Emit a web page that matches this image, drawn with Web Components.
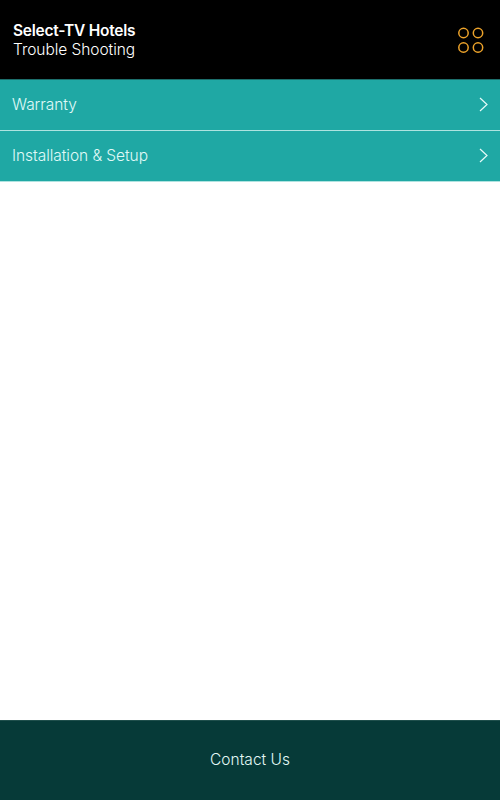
<!DOCTYPE html>
<html>
<head>
<meta charset="utf-8">
<title>Trouble Shooting</title>
<style>
  html, body { margin: 0; height: 100%; }
  body { font-family: "Inter", "Lato", sans-serif; background: #fff; }
</style>
</head>
<body>
<app-screen>
  <top-bar slot="header" title="Select-TV Hotels" subtitle="Trouble Shooting"></top-bar>
  <menu-row>Warranty</menu-row>
  <menu-row>Installation &amp; Setup</menu-row>
  <contact-bar slot="footer">Contact Us</contact-bar>
</app-screen>

<script>
class AppScreen extends HTMLElement {
    constructor() {
        super();
        this.attachShadow({ mode: "open" });
        this.shadowRoot.innerHTML = `
      <style>
        :host {
          display: flex;
          flex-direction: column;
          height: 800px;
        }
        main {
          flex: 1;
          display: block;
        }
      </style>
      <slot name="header"></slot>
      <main><slot></slot></main>
      <slot name="footer"></slot>
    `;
    }
}

class TopBar extends HTMLElement {
    constructor() {
        super();
        this.attachShadow({ mode: "open" });
    }

    connectedCallback() {
        this.shadowRoot.innerHTML = `
      <style>
        :host {
          display: flex;
          align-items: center;
          justify-content: space-between;
          height: 80px;
          padding: 0 16px 0 13px;
          background: #000;
          color: #fff;
          box-sizing: border-box;
          border-bottom: 1px solid #1c6f6c;
        }
        .title {
          font-size: 15.5px;
          line-height: 19px;
          font-weight: 600;
          letter-spacing: -0.25px;
        }
        .subtitle {
          font-size: 15.5px;
          line-height: 19px;
          font-weight: 300;
          letter-spacing: -0.05px;
        }
        svg { display: block; }
      </style>
      <div class="text">
        <div class="title">${this.getAttribute("title")}</div>
        <div class="subtitle">${this.getAttribute("subtitle")}</div>
      </div>
      <svg width="26" height="26" viewBox="0 0 26 26" fill="none" stroke="#eda32a" stroke-width="1.5">
        <circle cx="5.5" cy="6" r="4.7"/>
        <circle cx="20" cy="6" r="4.7"/>
        <circle cx="5.5" cy="20.5" r="4.7"/>
        <circle cx="20" cy="20.5" r="4.7"/>
      </svg>
    `;
    }
}

class MenuRow extends HTMLElement {
    constructor() {
        super();
        this.attachShadow({ mode: "open" });
        this.shadowRoot.innerHTML = `
      <style>
        :host {
          display: flex;
          align-items: center;
          justify-content: space-between;
          height: 51px;
          padding: 0 12px 2px 12px;
          box-sizing: border-box;
          background: #1fa8a4;
          color: #e0faf8;
          font-size: 15.5px;
          font-weight: 300;
          letter-spacing: -0.05px;
          border-bottom: 1px solid #aee3e0;
        }
        :host(:last-child) {
          background: #1aaba0;
          border-bottom: 1px solid #5fc6bd;
          height: 49px;
          padding-bottom: 0;
        }
        svg { display: block; }
      </style>
      <span><slot></slot></span>
      <svg width="9" height="15" viewBox="0 0 9 15" fill="none" stroke="#e6fbf9" stroke-width="1.2">
        <path d="M1 1l7 6.5-7 6.5"/>
      </svg>
    `;
    }
}

class ContactBar extends HTMLElement {
    constructor() {
        super();
        this.attachShadow({ mode: "open" });
        this.shadowRoot.innerHTML = `
      <style>
        :host {
          display: flex;
          align-items: center;
          justify-content: center;
          height: 80px;
          padding-bottom: 3px;
          background: #063a38;
          color: #e2f8f5;
          font-size: 15.5px;
          font-weight: 300;
          box-sizing: border-box;
          border-top: 1px solid #1f4f4c;
        }
      </style>
      <slot></slot>
    `;
    }
}

customElements.define("app-screen", AppScreen);
customElements.define("top-bar", TopBar);
customElements.define("menu-row", MenuRow);
customElements.define("contact-bar", ContactBar);
</script>
</body>
</html>
